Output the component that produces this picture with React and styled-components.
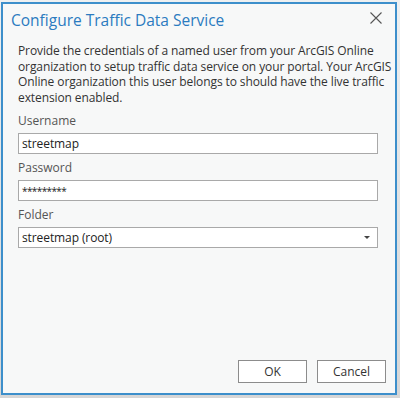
import React from 'react';
import styled, { createGlobalStyle } from 'styled-components';

const GlobalStyle = createGlobalStyle`
  html, body {
    margin: 0;
    padding: 0;
    background: #d9d9d9;
  }
  body {
    font-family: "Open Sans", "Noto Sans", sans-serif;
  }
`;

const INTRO_LINES = [
  'Provide the credentials of a named user from your ArcGIS Online',
  'organization to setup traffic data service on your portal. Your ArcGIS',
  'Online organization this user belongs to should have the live traffic',
  'extension enabled.',
];

const Screen = styled.div`
  width: 400px;
  height: 398px;
  padding: 2px 3px 3px 1px;
  box-sizing: border-box;
  background: linear-gradient(#eef0f1, #d6d6d6);
`;

const Dialog = styled.div`
  height: 100%;
  box-sizing: border-box;
  border: 2px solid #3d8fcb;
  background: #f7f8f8;
  display: flex;
  flex-direction: column;
`;

const TitleBar = styled.div`
  display: flex;
  align-items: center;
  justify-content: space-between;
  padding: 4px 8px 0 8px;
  height: 24px;
`;

const Title = styled.h1`
  margin: 0;
  font-size: 15.5px;
  font-weight: 400;
  color: #2b7bc0;
`;

const CloseButton = styled.button`
  border: none;
  background: none;
  padding: 0;
  width: 16px;
  height: 16px;
  display: flex;
  align-items: center;
  justify-content: center;
  margin: -4px 3px 0 0;
`;

const Body = styled.div`
  flex: 1;
  display: flex;
  flex-direction: column;
  padding: 11px 17px 0 15px;
`;

const Intro = styled.p`
  margin: 0 0 8px 0;
  font-size: 12px;
  line-height: 15.6px;
  letter-spacing: -0.1px;
  color: #333;
`;

const IntroLine = styled.span`
  display: block;
  white-space: nowrap;
`;

const Label = styled.label`
  display: block;
  font-size: 12px;
  line-height: 16px;
  color: #555;
  margin-top: ${(p) => p.$top || 0}px;
  margin-bottom: 4px;
`;

const Field = styled.div`
  height: 21px;
  box-sizing: border-box;
  border: 1px solid #a9a9a9;
  background: #fff;
  display: flex;
  align-items: center;
  justify-content: space-between;
  padding: 0 7px 0 3px;
  font-size: ${(p) => (p.$masked ? '10px' : '12px')};
  letter-spacing: ${(p) => (p.$masked ? '-0.6px' : '-0.1px')};
  color: #222;
`;

const Caret = styled.span`
  width: 0;
  height: 0;
  border-left: 3px solid transparent;
  border-right: 3px solid transparent;
  border-top: 3px solid #444;
`;

const Footer = styled.div`
  display: flex;
  justify-content: flex-end;
  gap: 10px;
  padding: 0 9px 10px 0;
`;

const Button = styled.button`
  width: 69px;
  height: 23px;
  box-sizing: border-box;
  border: 1px solid #8c8c8c;
  background: #fff;
  font-family: inherit;
  font-size: 12px;
  color: #333;
`;

export default function App() {
  return (
    <>
      <GlobalStyle />
      <Screen>
        <Dialog>
          <TitleBar>
            <Title>Configure Traffic Data Service</Title>
            <CloseButton aria-label="Close">
              <svg width="12" height="12" viewBox="0 0 12 12">
                <path d="M0.5 0.5 L11.5 11.5 M11.5 0.5 L0.5 11.5" stroke="#555" strokeWidth="1.1" fill="none" />
              </svg>
            </CloseButton>
          </TitleBar>
          <Body>
            <Intro>
              {INTRO_LINES.map((line) => (
                <IntroLine key={line}>{line}</IntroLine>
              ))}
            </Intro>
            <Label>Username</Label>
            <Field>streetmap</Field>
            <Label $top={6}>Password</Label>
            <Field $masked>*********</Field>
            <Label $top={6}>Folder</Label>
            <Field>
              <span>streetmap (root)</span>
              <Caret />
            </Field>
          </Body>
          <Footer>
            <Button>OK</Button>
            <Button>Cancel</Button>
          </Footer>
        </Dialog>
      </Screen>
    </>
  );
}
